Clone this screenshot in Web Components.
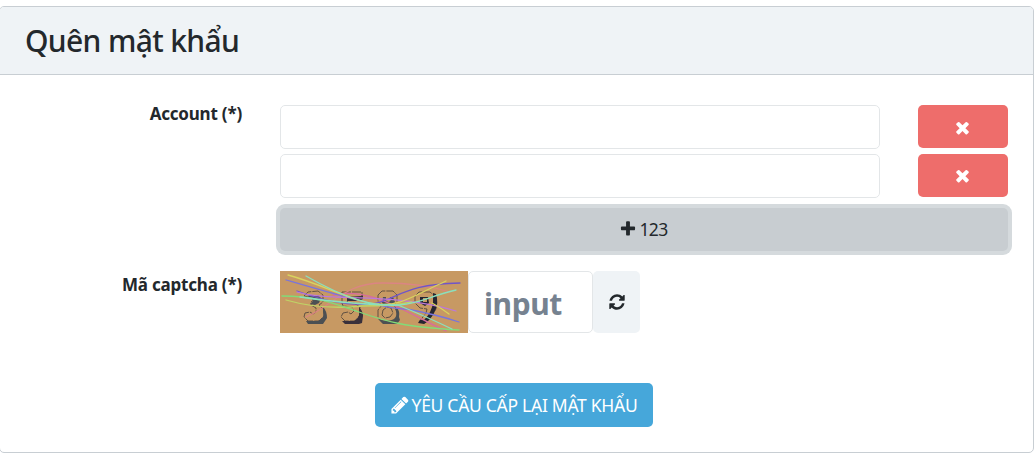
<!DOCTYPE html>
<html lang="vi"><head><meta charset="utf-8"><title>Quên mật khẩu</title>
<style>
html,body{margin:0;background:#fff}
body{height:472px;overflow:hidden;font:17.5px/26px "Noto Sans","Open Sans",sans-serif;color:#23282c}
</style></head><body>
<forgot-page></forgot-page>
<script>
function define(name, html, setup){
  const t=document.createElement('template');t.innerHTML=html;
  customElements.define(name,class extends HTMLElement{
    constructor(){super();this.attachShadow({mode:'open'}).append(t.content.cloneNode(true));}
    connectedCallback(){if(setup)setup(this);}
  });
}
const ICONS={
 times:'M1490 1322q0 40-28 68l-136 136q-28 28-68 28t-68-28l-294-294-294 294q-28 28-68 28t-68-28l-136-136q-28-28-28-68t28-68l294-294-294-294q-28-28-28-68t28-68l136-136q28-28 68-28t68 28l294 294 294-294q28-28 68-28t68 28l136 136q28 28 28 68t-28 68l-294 294 294 294q28 28 28 68z',
 plus:'M1600 736v192q0 40-28 68t-68 28h-416v416q0 40-28 68t-68 28h-192q-40 0-68-28t-28-68v-416h-416q-40 0-68-28t-28-68v-192q0-40 28-68t68-28h416v-416q0-40 28-68t68-28h192q40 0 68 28t28 68v416h416q40 0 68 28t28 68z',
 pencil:'M491 1536l91-91-235-235-91 91v107h128v128h107zm523-928q0-22-22-22-10 0-17 7l-542 542q-7 7-7 17 0 22 22 22 10 0 17-7l542-542q7-7 7-17zm-54-192l416 416-832 832h-416v-416zm683 96q0 53-37 90l-166 166-416-416 166-165q36-38 90-38 53 0 91 38l235 234q37 39 37 91z',
 refresh:'M1639 1056q0 5-1 7-64 268-268 434.500t-478 166.500q-146 0-282.500-55t-243.500-157l-129 129q-19 19-45 19t-45-19-19-45v-448q0-26 19-45t45-19h448q26 0 45 19t19 45-19 45l-137 137q71 66 161 102t187 36q134 0 250-65t186-179q11-17 53-117 8-23 30-23h192q13 0 22.500 9.500t9.500 22.500zm25-800v448q0 26-19 45t-45 19h-448q-26 0-45-19t-19-45 19-45l138-138q-148-137-349-137-134 0-250 65t-186 179q-11 17-53 117-8 23-30 23h-199q-13 0-22.500-9.500t-9.500-22.500v-7q65-268 270-434.500t480-166.500q146 0 284 55.500t245 156.500l130-129q19-19 45-19t45 19 19 45z'
};
define('fa-icon',`<style>:host{display:block;flex:none;width:var(--s,18px);height:var(--s,18px)}svg{display:block;width:100%;height:100%}</style><svg viewBox="0 0 1792 1792" fill="currentColor"><path/></svg>`,
 h=>h.shadowRoot.querySelector('path').setAttribute('d',ICONS[h.getAttribute('name')]));
define('ui-button',`<style>:host{display:flex;align-items:center;justify-content:center;box-sizing:border-box;height:44px;border-radius:5px;white-space:nowrap;cursor:pointer}
:host([kind=danger]){--s:19px;width:90px;height:43px;padding:2px 1px 0 0;background:#ee6d6b;color:#fff}
:host([kind=add]){height:43px;padding:0 2px 1px 0;background:#c8cdd1;box-shadow:0 0 0 4px #d5dadd;gap:3px;letter-spacing:-.75px}
:host([kind=primary]){--s:20px;width:278px;padding-right:1px;background:#46a7da;color:#fff;gap:2px;letter-spacing:-.28px}
:host([kind=light]){width:47px;height:62px;background:#eff3f6}</style><slot></slot>`);
define('text-field',`<style>:host{display:block}input{display:block;box-sizing:border-box;width:100%;height:var(--h,44px);border:1px solid #e3e6e8;border-radius:5px;padding:var(--pt,0) 15px 0;background:#fff;font:inherit;letter-spacing:inherit;outline:0}input::placeholder{color:#768290;opacity:1}</style><input>`,
 h=>h.shadowRoot.querySelector('input').placeholder=h.getAttribute('placeholder')||'');
define('form-row',`<style>:host{display:grid;grid-template-columns:243px 1fr;column-gap:37px}.l{text-align:right;font-weight:700;font-size:17px;line-height:26px;letter-spacing:-.2px;margin-top:-4px;padding-right:1px}</style><div class="l"><slot name="label"></slot></div><div><slot></slot></div>`);
define('panel-card',`<style>:host{display:block;box-sizing:border-box;width:1035px;height:447px;border:1px solid #c8ced3;border-radius:5px;overflow:hidden;background:#fff}
header{box-sizing:border-box;height:68px;padding:0 25px;background:#eff3f6;border-bottom:1px solid #c8ced3;font-size:30px;font-weight:500;line-height:68px;letter-spacing:-.65px}</style><header><slot name="title"></slot></header><slot></slot>`);
define('captcha-image',`<style>:host{display:block;width:187.5px;margin-right:.5px;height:62px;background:#c79963;overflow:hidden}svg{display:block}</style>
<svg width="188" height="62" fill="none">
<g stroke="#55483f" stroke-width=".9" stroke-dasharray="9 1">
<path d="M24 25l4-4 10-1 5 4v7l-4 3 5 5v6l-5 5H28l-4-4 1-4 5-1 3 2 3-2v-4l-5-3v-3l4-3-2-3-5 1z"/>
<path d="M62 21h20v5l-3 2H68l-1 4h7l6 4v8l-5 6H65l-4-4 2-4 5-1 3 2 3-3-2-4-9-1-1-3z"/>
<path d="M98 24l4-4h11l4 4v7l-3 3 3 5v7l-4 5h-10l-5-4v-8l4-5-4-3zm5 15l-1 5 3 3 5-1 3-4-2-5-4-1z"/>
<path d="M135 25l4-4h11l6 5v12l-6 9-5 5-6-1 7-9 1-4-7-1-5-5z"/></g>
<path fill="#4c5053" d="M43 36q4 4 4 11l-4 6H28l-2-3h12q7-3 5-9z"/>
<path fill="#4c5053" d="M27 27l3-3h8l3 3-2 5-4 2-5-1 3-3-2-3z"/>
<path fill="#39303b" d="M79 36q4 4 4 9l-1 7-3 1H65l-3-3h12q6-3 5-9z"/>
<path fill="#39303b" d="M67 26l14-1 2-2v5l-4 2H67z"/>
<path fill="#4c5053" d="M117 37q3 3 2 9l1 3-3 4h-14l-5-5q12 4 17-1 3-4 0-9z"/>
<path fill="#4c5053" fill-rule="evenodd" d="M103 26h10l2 5-3 4h-6l-4-3zm3 0v4l3 1 2-2-1-3z"/>
<path fill="#252631" fill-rule="evenodd" d="M153 22l3 1q3 9-1 17-4 9-11 13l-6-1 2-3h4q8-8 9-18zM140 26h8l1 6-4 3-5-3zm3 1v4h4v-4z"/>
<g stroke-width="1.3" stroke-linecap="round">
<path stroke="#d76b9e" d="M53 24C91 16 123 40 166 60"/>
<path stroke="#db8583" d="M26 46C55 33 65 12 103 12Q142 12 170 21"/>
<path stroke="#7974dc" d="M6 9C54 23 108 39 127 38Q158 44 179 51"/>
<path stroke="#7055c8" d="M17 20Q60 36 93 33C119 27 125 13 180 12"/>
<path stroke="#bd78db" d="M17 21C50 31 115 21 176 40"/>
<path stroke="#bfd466" d="M6 29C30 36 53 38 82 35Q113 35 132 31"/>
<path stroke="#82dc78" d="M2 25C35 25 53 32 79 41S123 56 179 59"/>
<path stroke="#d9d35e" d="M8 4C45 14 70 30 95 33S133 25 166 10M152 32Q161 37 169 43"/>
<path stroke="#8be0bd" d="M26 5C66 28 94 36 119 34S149 25 176 19M20 26Q76 34 118 34Q147 46 172 58"/>
</g></svg>`);
define('forgot-page',`<style>
:host{display:block;padding-top:6px;margin-left:-1px}
.form{padding-top:30px}
.grid{display:grid;grid-template-columns:600px 90px;column-gap:38px;row-gap:5px;width:728px}
.add{margin-top:10px;width:728px}.cap{display:flex;margin-top:20px}
.cap-label{display:block;margin-top:25px}
.cap text-field{width:125px;--h:62px;--pt:2px;font-size:30px;font-weight:700;letter-spacing:-.4px}
.grid .up{padding-top:0}
.foot{display:flex;padding-left:375px;margin-top:50px}
</style>
<panel-card><span slot="title">Quên mật khẩu</span><div class="form">
<form-row><span slot="label">Account (*)</span>
<div class="grid"><text-field></text-field><ui-button kind="danger"><fa-icon name="times"></fa-icon></ui-button><text-field></text-field><ui-button class="up" kind="danger"><fa-icon name="times"></fa-icon></ui-button></div>
<ui-button class="add" kind="add"><fa-icon name="plus"></fa-icon><span>123</span></ui-button></form-row>
<form-row><span slot="label" class="cap-label">Mã captcha (*)</span><div class="cap"><captcha-image></captcha-image><text-field placeholder="input"></text-field><ui-button kind="light"><fa-icon name="refresh"></fa-icon></ui-button></div></form-row>
<div class="foot"><ui-button kind="primary"><fa-icon name="pencil"></fa-icon><span>YÊU CẦU CẤP LẠI MẬT KHẨU</span></ui-button></div>
</div></panel-card>`);
</script></body></html>
